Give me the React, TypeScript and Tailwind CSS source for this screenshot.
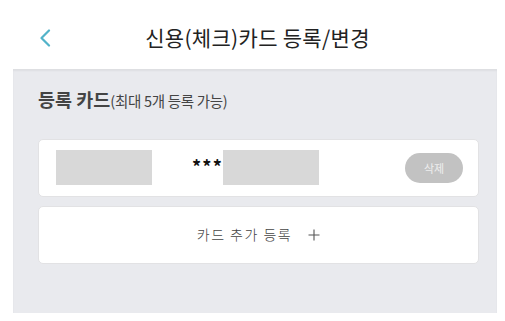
import React from "react";

const font = { fontFamily: '"Noto Sans CJK KR", "Noto Sans", sans-serif' };

function Header() {
  return (
    <div className="relative flex h-[69px] items-center justify-center bg-white pl-[10px] pt-[7px]">
      <button className="absolute left-[36px] top-[27px] p-[2px]">
        <svg width="14" height="18" viewBox="0 0 14 18" fill="none">
          <path d="M11 1.5 3.5 9l7.5 7.5" stroke="#52b3c9" strokeWidth="2.2" strokeLinecap="round" strokeLinejoin="round" />
        </svg>
      </button>
      <h1 className="text-[21px] font-normal tracking-[0.3px] text-[#222]">신용(체크)카드 등록/변경</h1>
    </div>
  );
}

function CardRow() {
  return (
    <div className="flex h-[58px] items-center rounded-[5px] border border-[#e2e2e4] bg-white pl-[17px] pr-[15px]">
      <div className="h-[35px] w-[96px] bg-[#d8d8d8]" />
      <span className="ml-[40px] -mt-[4px] text-[18px] font-bold leading-none tracking-[1.2px] text-[#111]">***</span>
      <div className="h-[35px] w-[96px] bg-[#d8d8d8]" />
      <button className="ml-auto flex h-[30px] w-[58px] items-center justify-center rounded-full bg-[#c2c2c2] text-[11px] text-[#eeeeee]">
        삭제
      </button>
    </div>
  );
}

function AddRow() {
  return (
    <button className="flex h-[58px] w-full items-center justify-center gap-[16px] rounded-[5px] border border-[#e2e2e4] bg-white">
      <span className="text-[14px] font-light tracking-[1.5px] text-[#444]">카드 추가 등록</span>
      <svg width="12" height="12" viewBox="0 0 12 12">
        <path d="M6 0.5v11M0.5 6h11" stroke="#555" strokeWidth="1.1" />
      </svg>
    </button>
  );
}

export default function App() {
  return (
    <div className="h-[321px] w-[505px] bg-white" style={font}>
      <Header />
      <div className="ml-[13px] h-[244px] w-[484px] bg-[#e9eaee] pl-[25px] pr-[18px] pt-[17px] shadow-[inset_0_2px_2px_rgba(0,0,0,0.05)]">
        <h2 className="flex items-baseline text-[#444]">
          <span className="text-[18.5px] font-bold">등록 카드</span>
          <span className="text-[14.5px] tracking-[-0.3px]">(최대 5개 등록 가능)</span>
        </h2>
        <div className="mt-[25px] flex flex-col gap-[9px]">
          <CardRow />
          <AddRow />
        </div>
      </div>
    </div>
  );
}
